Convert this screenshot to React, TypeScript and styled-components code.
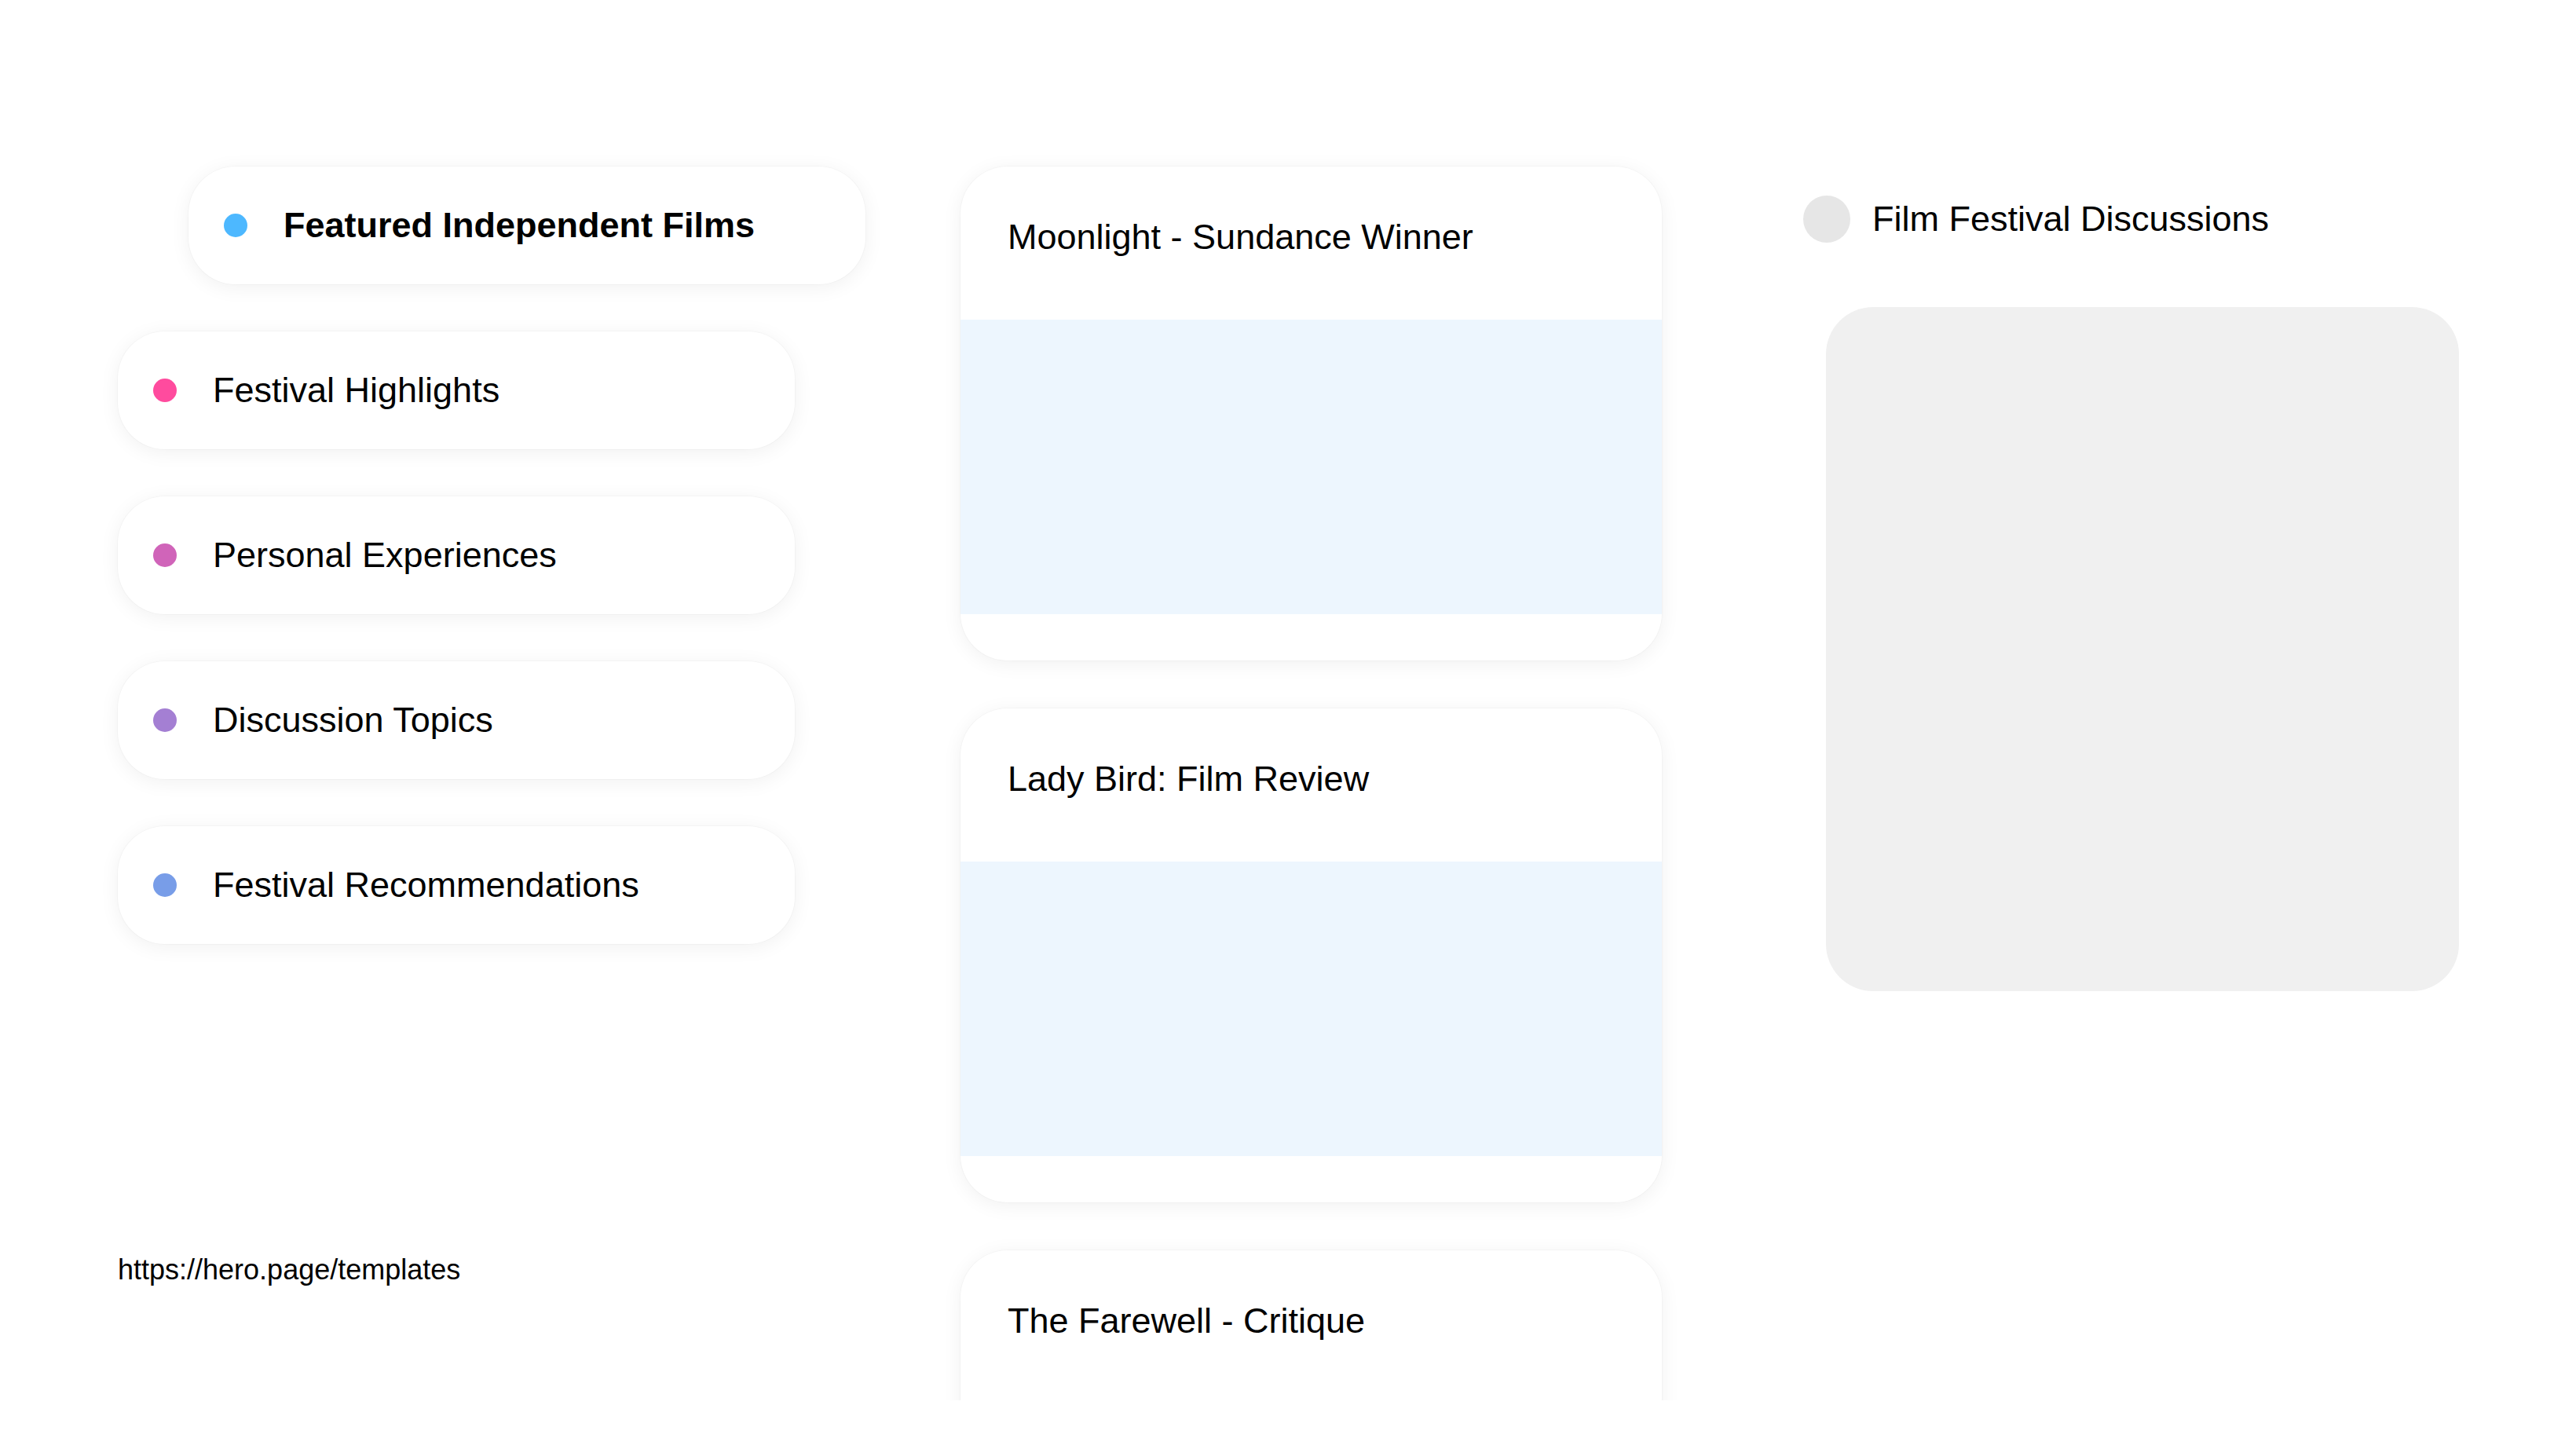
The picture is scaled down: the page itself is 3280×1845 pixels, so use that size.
import React from "react";
import styled, { createGlobalStyle } from "styled-components";

const GlobalStyle = createGlobalStyle`
  html, body {
    margin: 0;
    padding: 0;
    background: #ffffff;
  }
  body {
    font-family: "Liberation Sans", Arial, Helvetica, sans-serif;
    color: #000;
  }
  * { box-sizing: border-box; }
`;

const Page = styled.div`
  display: flex;
  align-items: flex-start;
  width: 3280px;
  height: 1845px;
  padding: 150px 0 0 150px;
  overflow: hidden;
`;

const LeftColumn = styled.div`
  width: 952px;
  padding-top: 62px;
  display: flex;
  flex-direction: column;
  gap: 60px;
`;

const NavCard = styled.div<{ $featured?: boolean }>`
  display: flex;
  align-items: center;
  gap: 46px;
  width: 862px;
  height: 150px;
  padding-left: 45px;
  margin-left: ${(p) => (p.$featured ? "90px" : "0")};
  background: #fff;
  border-radius: 60px;
  box-shadow: 0 0 0 1px rgba(0, 0, 0, 0.025), 0 4px 26px rgba(0, 0, 0, 0.06);
`;

const Dot = styled.span<{ $color: string }>`
  flex: none;
  width: 30px;
  height: 30px;
  border-radius: 50%;
  background: ${(p) => p.$color};
`;

const NavLabel = styled.span<{ $bold?: boolean }>`
  font-size: 45px;
  font-weight: ${(p) => (p.$bold ? 700 : 400)};
  white-space: nowrap;
`;

const FooterLink = styled.div`
  margin-top: 334px;
  font-size: 36px;
  line-height: normal;
`;

const MiddleColumn = styled.div`
  margin-left: 81px;
  width: 973px;
  height: 1633px;
  padding: 62px 40px 0;
  overflow: hidden;
  display: flex;
  flex-direction: column;
  gap: 61px;
`;

const PostCard = styled.article`
  flex: none;
  width: 893px;
  height: 629px;
  background: #fff;
  border-radius: 60px;
  overflow: hidden;
  display: flex;
  flex-direction: column;
  box-shadow: 0 0 0 1px rgba(0, 0, 0, 0.025), 0 4px 26px rgba(0, 0, 0, 0.06);
`;

const PostHeader = styled.div`
  height: 195px;
  padding: 64px 60px 0;
  flex: none;
`;

const PostTitle = styled.h2`
  margin: 0;
  font-size: 45px;
  font-weight: 400;
  line-height: normal;
  white-space: nowrap;
`;

const PostImage = styled.div`
  height: 375px;
  flex: none;
  background: #edf6fe;
`;

const RightColumn = styled.div`
  margin-left: 140px;
  width: 839px;
  padding-top: 99px;
  display: flex;
  flex-direction: column;
`;

const ChatHeader = styled.div`
  display: flex;
  align-items: center;
  gap: 28px;
  height: 60px;
`;

const Avatar = styled.span`
  flex: none;
  width: 60px;
  height: 60px;
  border-radius: 50%;
  background: #e6e6e6;
`;

const ChatTitle = styled.span`
  font-size: 45px;
  white-space: nowrap;
`;

const ChatPanel = styled.div`
  margin: 82px 0 0 29px;
  width: 806px;
  height: 871px;
  border-radius: 60px;
  background: #f0f0f0;
`;

const navItems = [
  { label: "Festival Highlights", color: "#ff4b9e" },
  { label: "Personal Experiences", color: "#d064b9" },
  { label: "Discussion Topics", color: "#a47fd3" },
  { label: "Festival Recommendations", color: "#789de8" },
];

const posts = [
  "Moonlight - Sundance Winner",
  "Lady Bird: Film Review",
  "The Farewell - Critique",
];

export default function App() {
  return (
    <>
      <GlobalStyle />
      <Page>
        <LeftColumn>
          <NavCard $featured>
            <Dot $color="#4db8ff" />
            <NavLabel $bold>Featured Independent Films</NavLabel>
          </NavCard>
          {navItems.map((item) => (
            <NavCard key={item.label}>
              <Dot $color={item.color} />
              <NavLabel>{item.label}</NavLabel>
            </NavCard>
          ))}
          <FooterLink>https://hero.page/templates</FooterLink>
        </LeftColumn>
        <MiddleColumn>
          {posts.map((title) => (
            <PostCard key={title}>
              <PostHeader>
                <PostTitle>{title}</PostTitle>
              </PostHeader>
              <PostImage />
            </PostCard>
          ))}
        </MiddleColumn>
        <RightColumn>
          <ChatHeader>
            <Avatar />
            <ChatTitle>Film Festival Discussions</ChatTitle>
          </ChatHeader>
          <ChatPanel />
        </RightColumn>
      </Page>
    </>
  );
}
